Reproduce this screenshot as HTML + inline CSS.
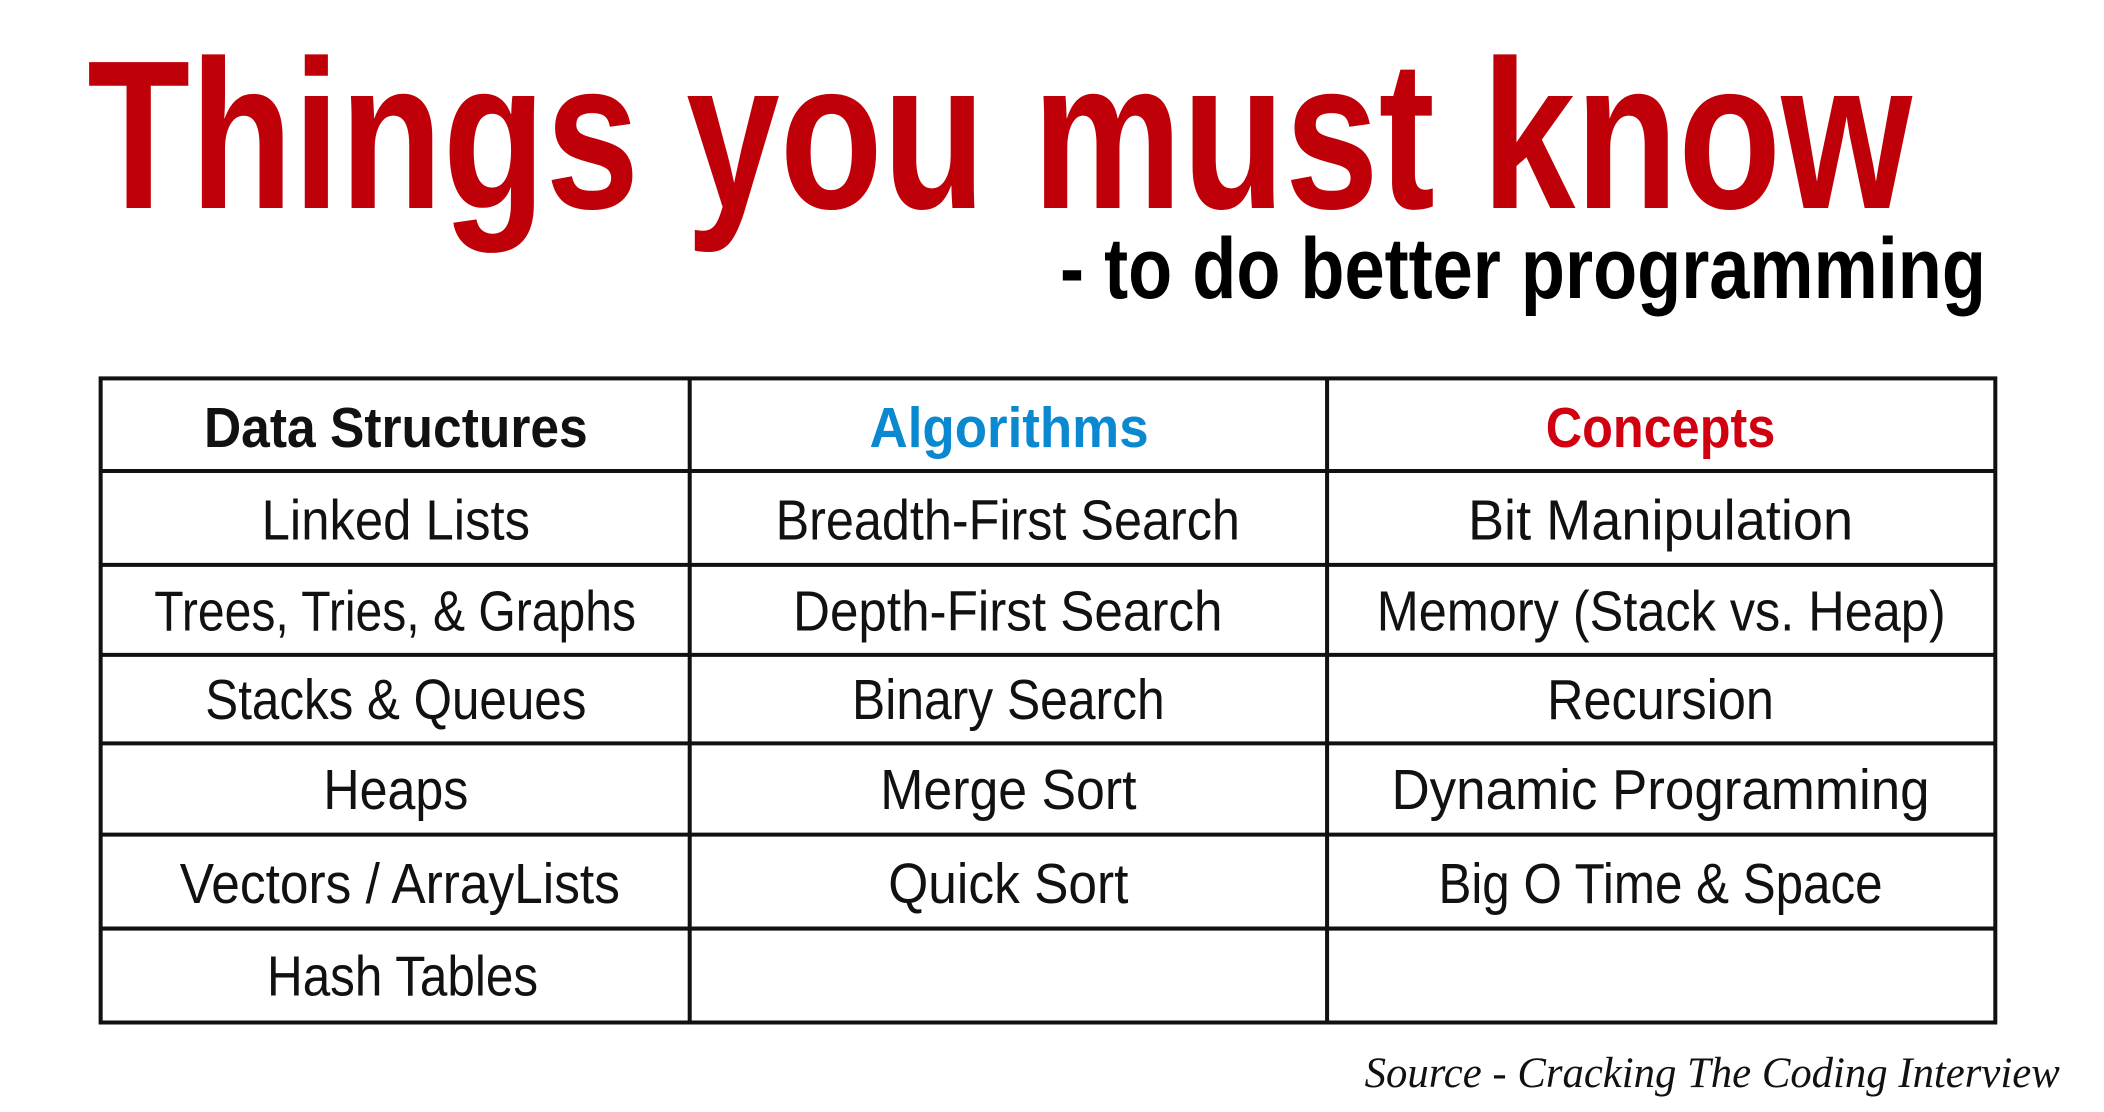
<!DOCTYPE html>
<html><head><meta charset="utf-8"><style>
html,body{margin:0;padding:0;background:#fff;width:2104px;height:1112px;overflow:hidden}
svg{display:block}
</style></head><body>
<svg width="2104" height="1112" viewBox="0 0 1568 828.7" preserveAspectRatio="none" xmlns="http://www.w3.org/2000/svg">
<rect width="1568" height="828.7" fill="#fff"/>
<text x="65" y="155" font-family="Liberation Sans, sans-serif" font-weight="600" font-size="158" fill="#bf0008" textLength="1360" lengthAdjust="spacingAndGlyphs">Things you must know</text>
<text x="790" y="222" font-family="Liberation Sans, sans-serif" font-weight="bold" font-size="64" fill="#000" textLength="690" lengthAdjust="spacingAndGlyphs">- to do better programming</text>
<g stroke="#111" stroke-width="3" fill="none">
<rect x="75" y="282" width="1412" height="480"/>
<line x1="514" y1="282" x2="514" y2="762"/>
<line x1="989" y1="282" x2="989" y2="762"/>
<line x1="75" y1="351" x2="1487" y2="351"/>
<line x1="75" y1="421" x2="1487" y2="421"/>
<line x1="75" y1="488" x2="1487" y2="488"/>
<line x1="75" y1="554" x2="1487" y2="554"/>
<line x1="75" y1="622" x2="1487" y2="622"/>
<line x1="75" y1="692" x2="1487" y2="692"/>
</g>
<g font-family="Liberation Sans, sans-serif" font-size="42" fill="#111">
<text x="152" y="333" font-weight="bold" textLength="286" lengthAdjust="spacingAndGlyphs">Data Structures</text>
<text x="648" y="333" font-weight="bold" fill="#0a88d0" textLength="208" lengthAdjust="spacingAndGlyphs">Algorithms</text>
<text x="1152" y="333" font-weight="bold" fill="#d00010" textLength="171" lengthAdjust="spacingAndGlyphs">Concepts</text>
<text x="195" y="402" textLength="200" lengthAdjust="spacingAndGlyphs">Linked Lists</text>
<text x="578" y="402" textLength="346" lengthAdjust="spacingAndGlyphs">Breadth-First Search</text>
<text x="1094" y="402" textLength="287" lengthAdjust="spacingAndGlyphs">Bit Manipulation</text>
<text x="115" y="470" textLength="359" lengthAdjust="spacingAndGlyphs">Trees, Tries, &amp; Graphs</text>
<text x="591" y="470" textLength="320" lengthAdjust="spacingAndGlyphs">Depth-First Search</text>
<text x="1026" y="470" textLength="424" lengthAdjust="spacingAndGlyphs">Memory (Stack vs. Heap)</text>
<text x="153" y="536" textLength="284" lengthAdjust="spacingAndGlyphs">Stacks &amp; Queues</text>
<text x="635" y="536" textLength="233" lengthAdjust="spacingAndGlyphs">Binary Search</text>
<text x="1153" y="536" textLength="169" lengthAdjust="spacingAndGlyphs">Recursion</text>
<text x="241" y="603" textLength="108" lengthAdjust="spacingAndGlyphs">Heaps</text>
<text x="656" y="603" textLength="191" lengthAdjust="spacingAndGlyphs">Merge Sort</text>
<text x="1037" y="603" textLength="401" lengthAdjust="spacingAndGlyphs">Dynamic Programming</text>
<text x="134" y="673" textLength="328" lengthAdjust="spacingAndGlyphs">Vectors / ArrayLists</text>
<text x="662" y="673" textLength="179" lengthAdjust="spacingAndGlyphs">Quick Sort</text>
<text x="1072" y="673" textLength="331" lengthAdjust="spacingAndGlyphs">Big O Time &amp; Space</text>
<text x="199" y="742" textLength="202" lengthAdjust="spacingAndGlyphs">Hash Tables</text>
</g>
<text x="1017" y="810" font-family="Liberation Serif, serif" font-style="italic" font-size="32" fill="#111" textLength="518" lengthAdjust="spacingAndGlyphs">Source - Cracking The Coding Interview</text>
</svg>
</body></html>
